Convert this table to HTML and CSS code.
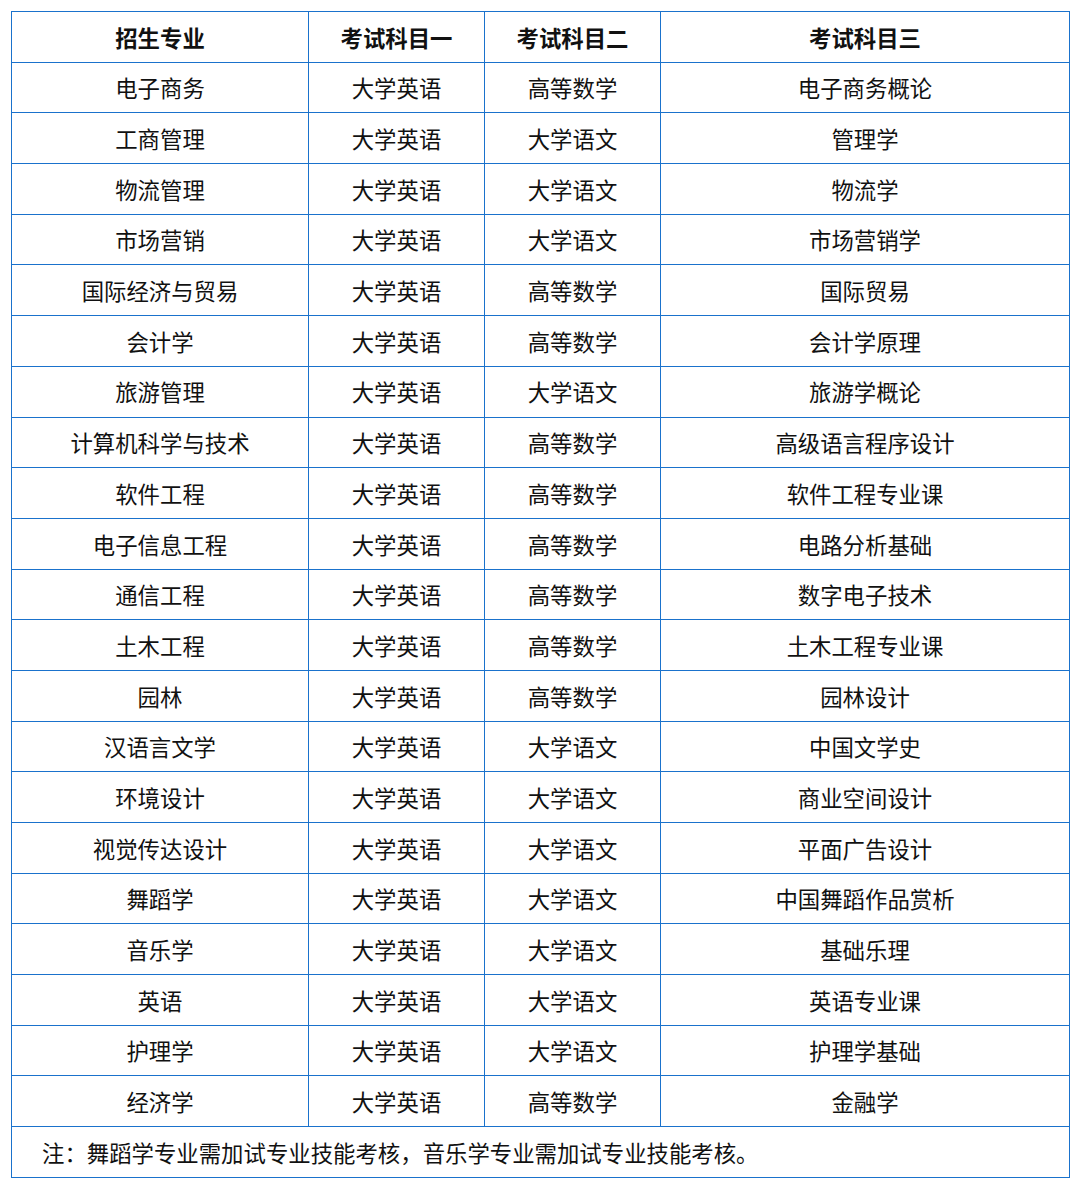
FILE: index.html
```html
<!DOCTYPE html>
<html lang="zh">
<head>
<meta charset="utf-8">
<link rel="stylesheet" href="styles.css">
</head>
<body>
<table class="exam">
<colgroup><col class="c1"><col class="c2"><col class="c3"><col class="c4"></colgroup>
<thead>
<tr><th>招生专业</th><th>考试科目一</th><th>考试科目二</th><th>考试科目三</th></tr>
</thead>
<tbody>
<tr><td>电子商务</td><td>大学英语</td><td>高等数学</td><td>电子商务概论</td></tr>
<tr><td>工商管理</td><td>大学英语</td><td>大学语文</td><td>管理学</td></tr>
<tr><td>物流管理</td><td>大学英语</td><td>大学语文</td><td>物流学</td></tr>
<tr><td>市场营销</td><td>大学英语</td><td>大学语文</td><td>市场营销学</td></tr>
<tr><td>国际经济与贸易</td><td>大学英语</td><td>高等数学</td><td>国际贸易</td></tr>
<tr><td>会计学</td><td>大学英语</td><td>高等数学</td><td>会计学原理</td></tr>
<tr><td>旅游管理</td><td>大学英语</td><td>大学语文</td><td>旅游学概论</td></tr>
<tr><td>计算机科学与技术</td><td>大学英语</td><td>高等数学</td><td>高级语言程序设计</td></tr>
<tr><td>软件工程</td><td>大学英语</td><td>高等数学</td><td>软件工程专业课</td></tr>
<tr><td>电子信息工程</td><td>大学英语</td><td>高等数学</td><td>电路分析基础</td></tr>
<tr><td>通信工程</td><td>大学英语</td><td>高等数学</td><td>数字电子技术</td></tr>
<tr><td>土木工程</td><td>大学英语</td><td>高等数学</td><td>土木工程专业课</td></tr>
<tr><td>园林</td><td>大学英语</td><td>高等数学</td><td>园林设计</td></tr>
<tr><td>汉语言文学</td><td>大学英语</td><td>大学语文</td><td>中国文学史</td></tr>
<tr><td>环境设计</td><td>大学英语</td><td>大学语文</td><td>商业空间设计</td></tr>
<tr><td>视觉传达设计</td><td>大学英语</td><td>大学语文</td><td>平面广告设计</td></tr>
<tr><td>舞蹈学</td><td>大学英语</td><td>大学语文</td><td>中国舞蹈作品赏析</td></tr>
<tr><td>音乐学</td><td>大学英语</td><td>大学语文</td><td>基础乐理</td></tr>
<tr><td>英语</td><td>大学英语</td><td>大学语文</td><td>英语专业课</td></tr>
<tr><td>护理学</td><td>大学英语</td><td>大学语文</td><td>护理学基础</td></tr>
<tr><td>经济学</td><td>大学英语</td><td>高等数学</td><td>金融学</td></tr>
<tr><td class="note" colspan="4">注：舞蹈学专业需加试专业技能考核，音乐学专业需加试专业技能考核。</td></tr>
</tbody>
</table>
</body>
</html>
```
FILE: styles.css
```css
html, body {
  margin: 0;
  padding: 0;
  background: #ffffff;
}
body {
  padding: 11px 0 0 11px;
  font-family: "Noto Sans CJK SC", "Noto Sans", sans-serif;
  color: #111111;
}
.exam {
  border-collapse: collapse;
  width: 1058px;
  table-layout: fixed;
  font-size: 22.4px;
}
.c1 { width: 297px; }
.c2 { width: 176px; }
.c3 { width: 176px; }
.c4 { width: 409px; }
.exam th, .exam td {
  border: 1px solid #1a72cc;
  height: 50.7px;
  padding: 0;
  text-align: center;
  vertical-align: middle;
  line-height: 1;
  padding-top: 0;
  box-sizing: border-box;
}
.exam th {
  font-weight: bold;
}
.exam td.note {
  text-align: left;
  padding-left: 30px;
}
```
